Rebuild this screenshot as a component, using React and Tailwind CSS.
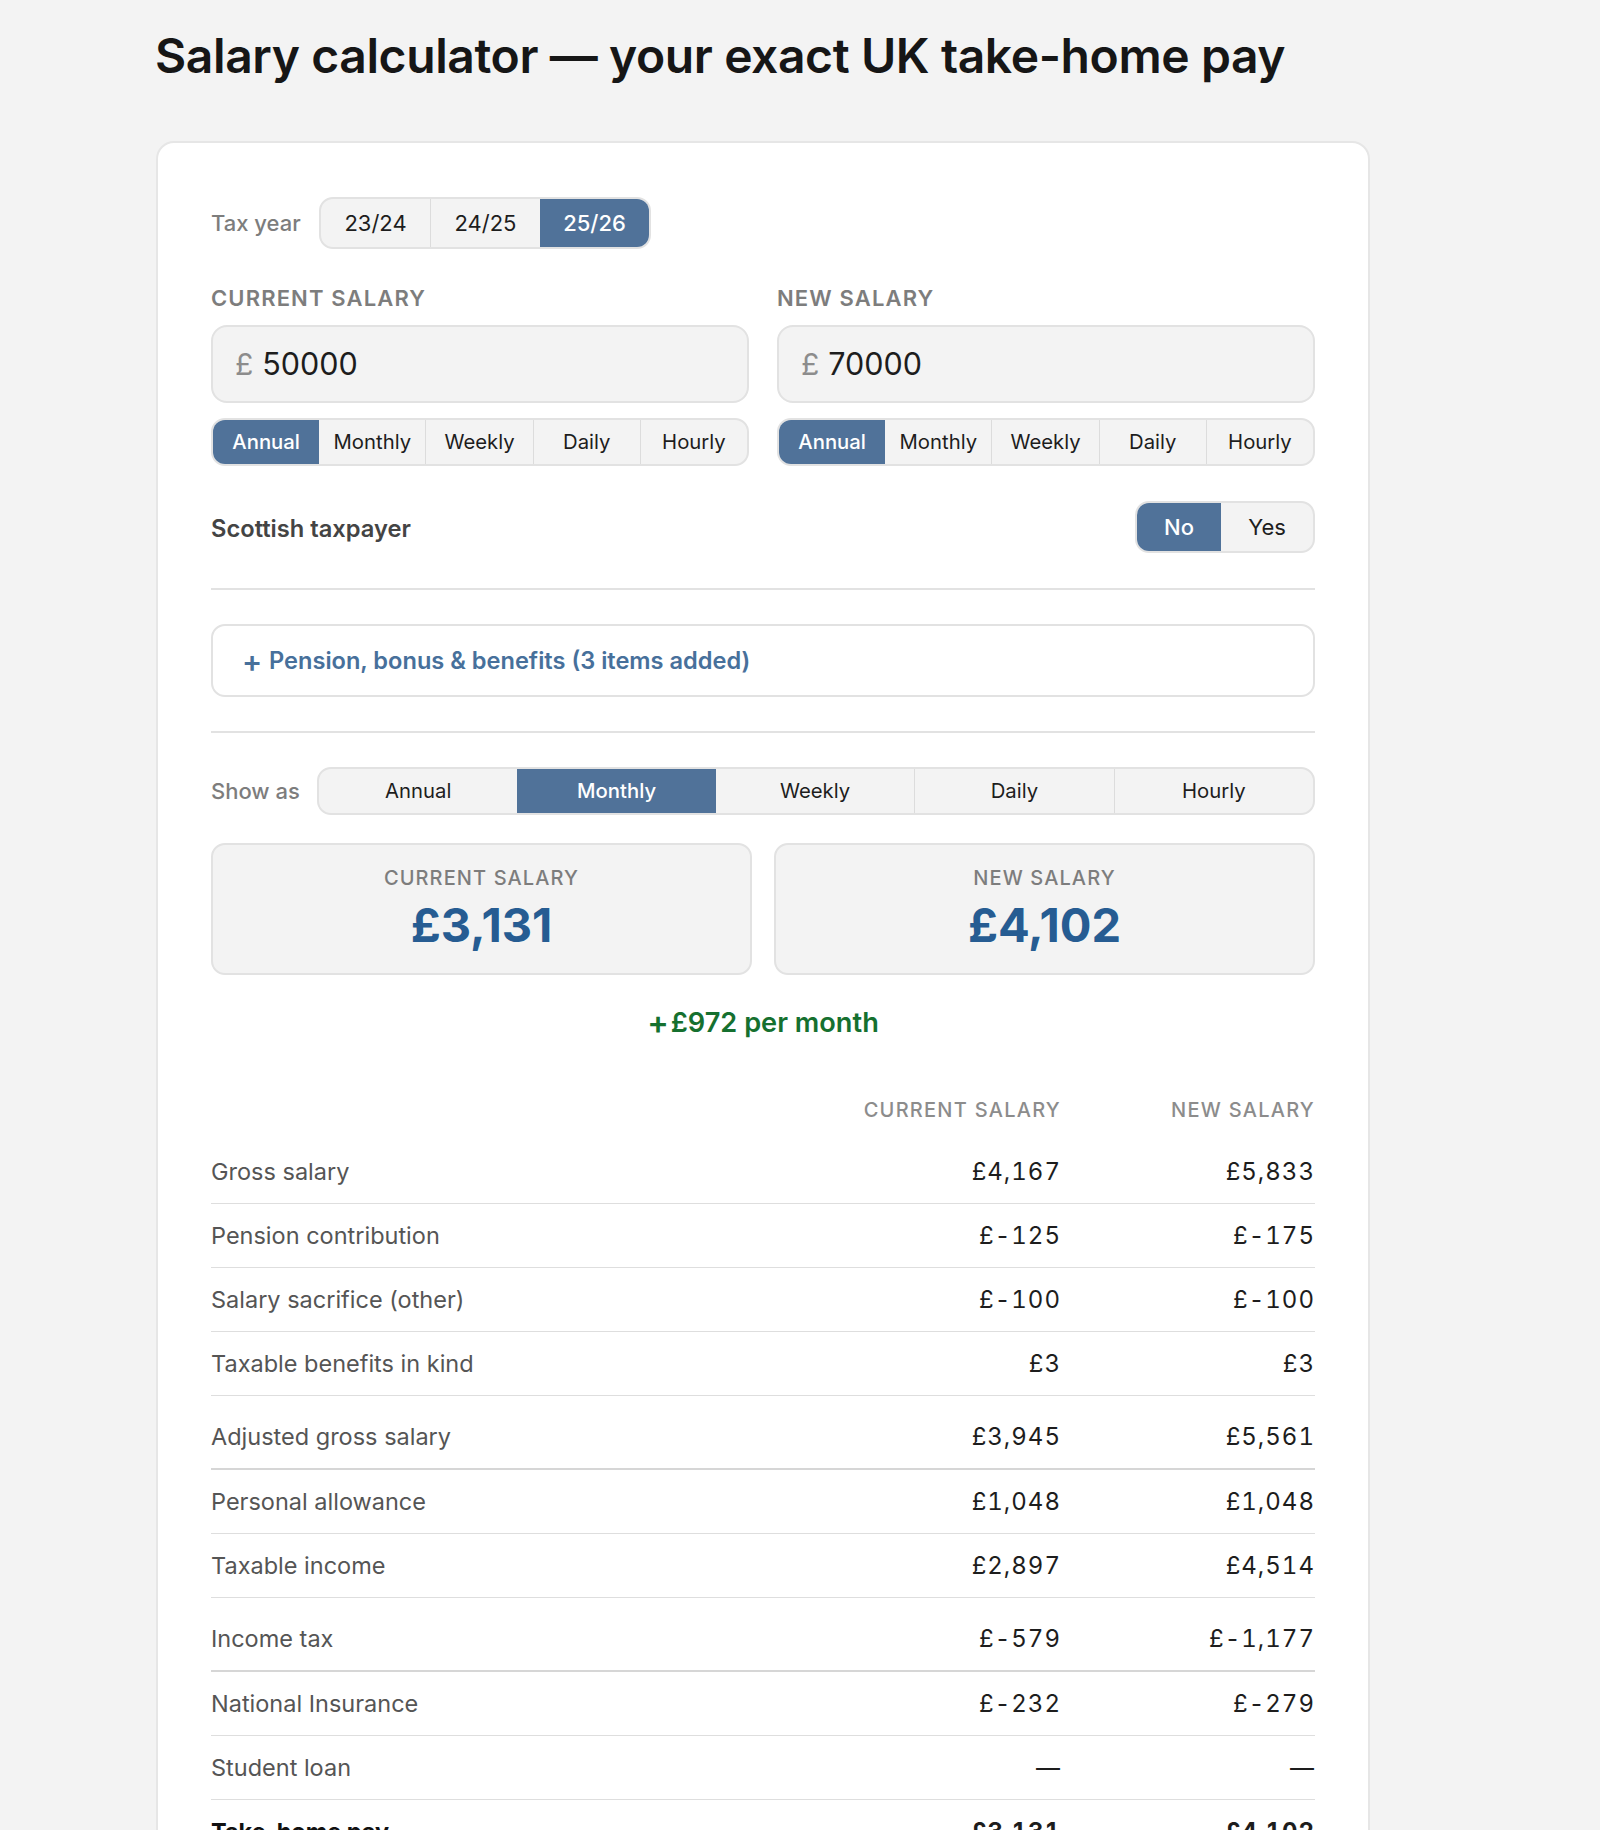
const FONT = "font-['Inter','Noto_Sans',sans-serif]";

function Seg({ items, active, className = "", text = "text-[20.3px]", firstClass = "flex-1" }) {
  return (
    <div className={`flex overflow-hidden rounded-[14px] border-2 border-[#e2e2e2] bg-[#f3f3f3] ${className}`}>
      {items.map((it, i) => (
        <div
          key={it}
          className={`flex items-center justify-center ${i === 0 ? firstClass : "flex-1"} ${text} ${i === active ? "bg-[#507299] font-medium text-white" : "text-[#1d1d1d]"} ${i > 0 && i !== active && i - 1 !== active ? "border-l border-[#dcdcdc]" : ""}`}
        >
          {it}
        </div>
      ))}
    </div>
  );
}

const UNITS = ["Annual", "Monthly", "Weekly", "Daily", "Hourly"];

function SalaryInput({ label, value }) {
  return (
    <div className="flex flex-col">
      <div className="h-[26px] text-[22px] leading-[26px] font-semibold tracking-[1.14px] text-[#7d7d7d]">{label}</div>
      <div className="mt-[14px] flex h-[78px] items-center rounded-[16px] border-2 border-[#e2e2e2] bg-[#f3f3f3] pl-[22px]">
        <span className="text-[30px] text-[#8c8c8c]">£</span>
        <span className="ml-[9px] text-[30.5px] text-[#1d1d1d]">{value}</span>
      </div>
      <Seg items={UNITS} active={0} className="mt-[15px] h-[48px]" />
    </div>
  );
}

function Stat({ label, value }) {
  return (
    <div className="flex h-[132px] flex-col items-center rounded-[14px] border-2 border-[#e2e2e2] bg-[#f3f3f3] pt-[20px]">
      <div className="text-[20px] leading-[26px] font-medium tracking-[1.1px] text-[#7d7d7d]">{label}</div>
      <div className="mt-[4px] text-[47px] leading-[60px] font-bold text-[#265c92]">{value}</div>
    </div>
  );
}

function Row({ label, a, b, section, tall, bold }) {
  const shape = section
    ? `${tall ? "h-[75px]" : "h-[74px]"} border-b-2 border-[#d6d6d6] pt-[10px]`
    : "h-[64px] border-b border-[#dedede]";
  return (
    <div className={`flex items-center ${shape} ${bold ? "font-bold text-[#111]" : ""}`}>
      <div className={`flex-1 text-[23.5px] ${bold ? "text-[#111]" : "text-[#555]"}`}>{label}</div>
      <div className="w-[254px] text-right text-[24px] tracking-[1px] text-[#1d1d1d] tabular-nums">{a}</div>
      <div className="w-[254px] text-right text-[24px] tracking-[1px] text-[#1d1d1d] tabular-nums">{b}</div>
    </div>
  );
}

export default function App() {
  return (
    <div className={`h-[1830px] overflow-hidden bg-[#f3f3f3] pl-[156px] ${FONT}`}>
      <div className="w-[1214px]">
        <h1 className="-ml-[1px] flex h-[141px] items-start pt-[24px] text-[48px] leading-[64px] font-semibold tracking-[-0.4px] text-[#161616]">
          Salary calculator — your exact UK take-home pay
        </h1>
        <div className="rounded-[18px] border-2 border-[#e6e6e6] bg-white px-[53px] pt-[54px]">
          <div className="flex items-center">
            <span className="w-[108px] text-[22px] font-medium text-[#7d7d7d]">Tax year</span>
            <Seg items={["23/24", "24/25", "25/26"]} active={2} className="h-[52px] w-[332px]" text="text-[22px]" />
          </div>
          <div className="mt-[36px] grid grid-cols-2 gap-[28px]">
            <SalaryInput label="CURRENT SALARY" value="50000" />
            <SalaryInput label="NEW SALARY" value="70000" />
          </div>
          <div className="mt-[35px] flex h-[52px] items-center justify-between">
            <span className="pt-[3px] text-[23.7px] font-semibold text-[#444]">Scottish taxpayer</span>
            <Seg items={["No", "Yes"]} active={0} className="h-[52px] w-[180px]" text="text-[22px]" firstClass="w-[84px] flex-none" />
          </div>
          <div className="mt-[35px] h-[2px] bg-[#e2e2e2]" />
          <div className="mt-[34px] flex h-[73px] items-center rounded-[14px] border-2 border-[#e2e2e2] pl-[29px] text-[23.6px] font-semibold text-[#47709b]">
            <span className="w-[27px] text-[30px] leading-none">+</span>
            <span>Pension, bonus &amp; benefits (3 items added)</span>
          </div>
          <div className="mt-[34px] h-[2px] bg-[#e2e2e2]" />
          <div className="mt-[34px] flex items-center">
            <span className="w-[106px] text-[22px] font-medium text-[#7d7d7d]">Show as</span>
            <Seg items={UNITS} active={1} className="h-[48px] flex-1" />
          </div>
          <div className="mt-[28px] grid grid-cols-2 gap-[22px]">
            <Stat label="CURRENT SALARY" value="£3,131" />
            <Stat label="NEW SALARY" value="£4,102" />
          </div>
          <div className="mt-[33px] flex h-[30px] items-center justify-center text-[27.2px] leading-[30px] font-semibold text-[#15702f]">
            <span className="mr-[2px] text-[32px] leading-[30px]">+</span>
            <span>£972 per month</span>
          </div>
          <div className="mt-[60px] flex h-[24px] items-center text-[20px] font-medium tracking-[1.25px] text-[#8c8c8c]">
            <div className="flex-1" />
            <div className="w-[254px] text-right">CURRENT SALARY</div>
            <div className="w-[254px] text-right">NEW SALARY</div>
          </div>
          <div className="mt-[18px]">
            <Row label="Gross salary" a="£4,167" b="£5,833" />
            <Row label="Pension contribution" a="£-125" b="£-175" />
            <Row label="Salary sacrifice (other)" a="£-100" b="£-100" />
            <Row label="Taxable benefits in kind" a="£3" b="£3" />
            <Row section label="Adjusted gross salary" a="£3,945" b="£5,561" />
            <Row label="Personal allowance" a="£1,048" b="£1,048" />
            <Row label="Taxable income" a="£2,897" b="£4,514" />
            <Row section label="Income tax" a="£-579" b="£-1,177" />
            <Row label="National Insurance" a="£-232" b="£-279" />
            <Row label="Student loan" a="—" b="—" />
            <Row bold label="Take-home pay" a="£3,131" b="£4,102" />
          </div>
        </div>
      </div>
    </div>
  );
}
